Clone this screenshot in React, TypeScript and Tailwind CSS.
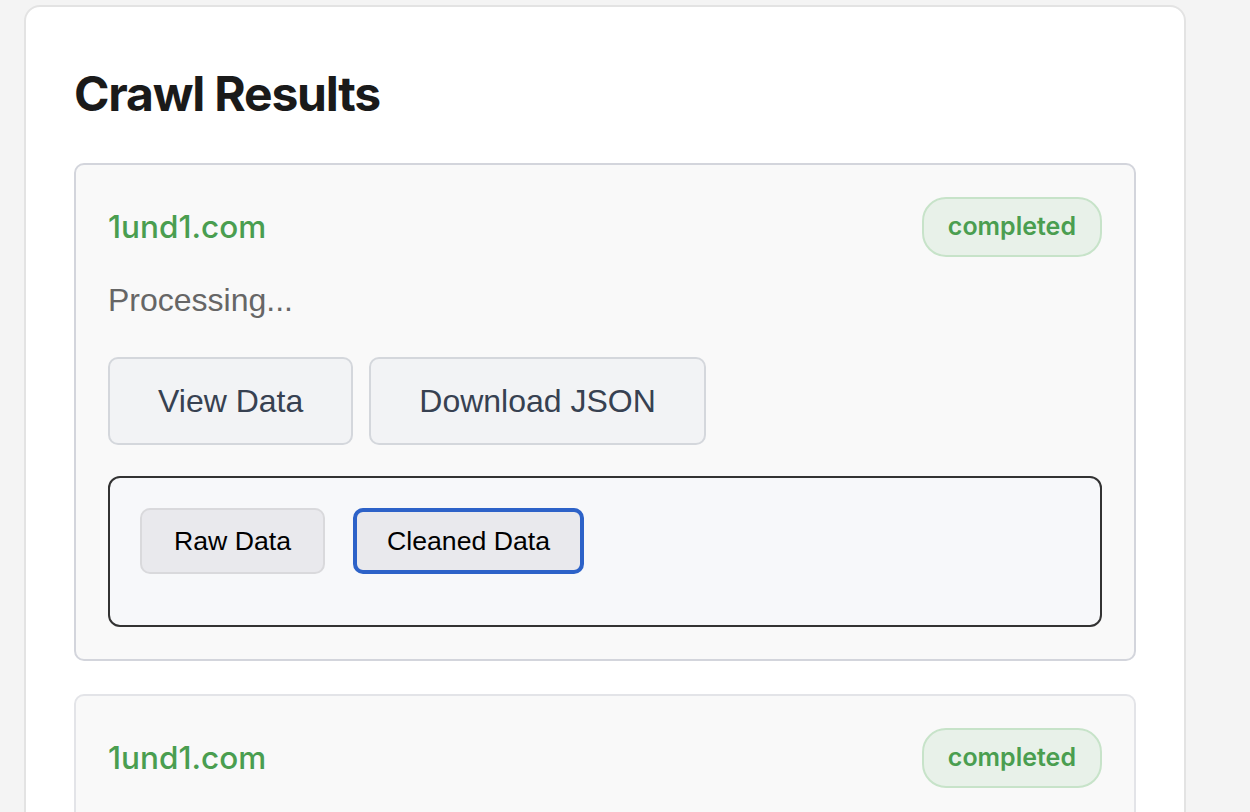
import { useState } from "react";

type CrawlResult = {
  id: number;
  domain: string;
  status: string;
};

const results: CrawlResult[] = [
  { id: 1, domain: "1und1.com", status: "completed" },
  { id: 2, domain: "1und1.com", status: "completed" },
];

const inter = "font-['Inter','Noto_Sans',sans-serif]";
const arial = "font-['Liberation_Sans','Arial',sans-serif]";

function ResultCard({ result, first }: { result: CrawlResult; first: boolean }) {
  const [view, setView] = useState<"raw" | "cleaned">("cleaned");

  return (
    <div
      className={
        first
          ? "rounded-[10px] border-2 border-[#d3d5dc] bg-[#f9f9f9] px-8 pt-8 pb-8"
          : "mt-[33px] rounded-[10px] border-2 border-[#e3e4e8] bg-[#f9f9f9] px-8 pt-8 pb-8"
      }
    >
      <div className="flex items-center justify-between">
        <span className={`${inter} text-[31.5px] font-medium text-[#4a9e50]`}>{result.domain}</span>
        <span
          className={`${inter} flex h-[60px] items-center rounded-[24px] border-2 border-[#c7e3c9] bg-[#e8f1e9] px-6 text-[25px] font-semibold text-[#4a9e50]`}
        >
          {result.status}
        </span>
      </div>

      <p className={`${arial} mt-[25px] text-[32px] leading-[37px] text-[#666666]`}>Processing...</p>

      <div className={`${arial} mt-[38px] flex gap-4`}>
        <button className="rounded-[10px] border-2 border-[#d4d7dc] bg-[#f2f3f5] px-12 py-6 text-[32px] leading-[36px] text-[#374151]">
          View Data
        </button>
        <button className="rounded-[10px] border-2 border-[#d4d7dc] bg-[#f2f3f5] px-12 py-6 text-[32px] leading-[36px] text-[#374151]">
          Download JSON
        </button>
      </div>

      <div className="mt-[31px] rounded-xl border-2 border-[#333333] bg-[#f7f8fa] px-[30px] pt-[30px] pb-[51px]">
        <div className={`${arial} flex gap-[28px]`}>
          <button
            onClick={() => setView("raw")}
            className={
              view === "raw"
                ? "rounded-[10px] border-4 border-[#2d62c8] bg-[#e9e9ed] px-[30px] py-[14px] text-[26.67px] leading-[30px] text-black"
                : "rounded-[10px] border-2 border-[#d9d9dc] bg-[#e9e9ed] px-8 py-4 text-[26.67px] leading-[30px] text-black"
            }
          >
            Raw Data
          </button>
          <button
            onClick={() => setView("cleaned")}
            className={
              view === "cleaned"
                ? "rounded-[10px] border-4 border-[#2d62c8] bg-[#e9e9ed] px-[30px] py-[14px] text-[26.67px] leading-[30px] text-black"
                : "rounded-[10px] border-2 border-[#d9d9dc] bg-[#e9e9ed] px-8 py-4 text-[26.67px] leading-[30px] text-black"
            }
          >
            Cleaned Data
          </button>
        </div>
      </div>
    </div>
  );
}

export default function App() {
  return (
    <div className="min-h-screen bg-[#f4f4f4] pt-[5px] pl-6">
      <div className="w-[1162px] rounded-2xl border-2 border-[#e3e3e3] bg-white p-12">
        <h2 className={`${inter} mt-[10px] mb-10 text-[48px] leading-[58px] font-bold tracking-[-1.2px] text-[#1a1a1a]`}>
          Crawl Results
        </h2>
        {results.map((r, i) => (
          <ResultCard key={r.id} result={r} first={i === 0} />
        ))}
      </div>
    </div>
  );
}
